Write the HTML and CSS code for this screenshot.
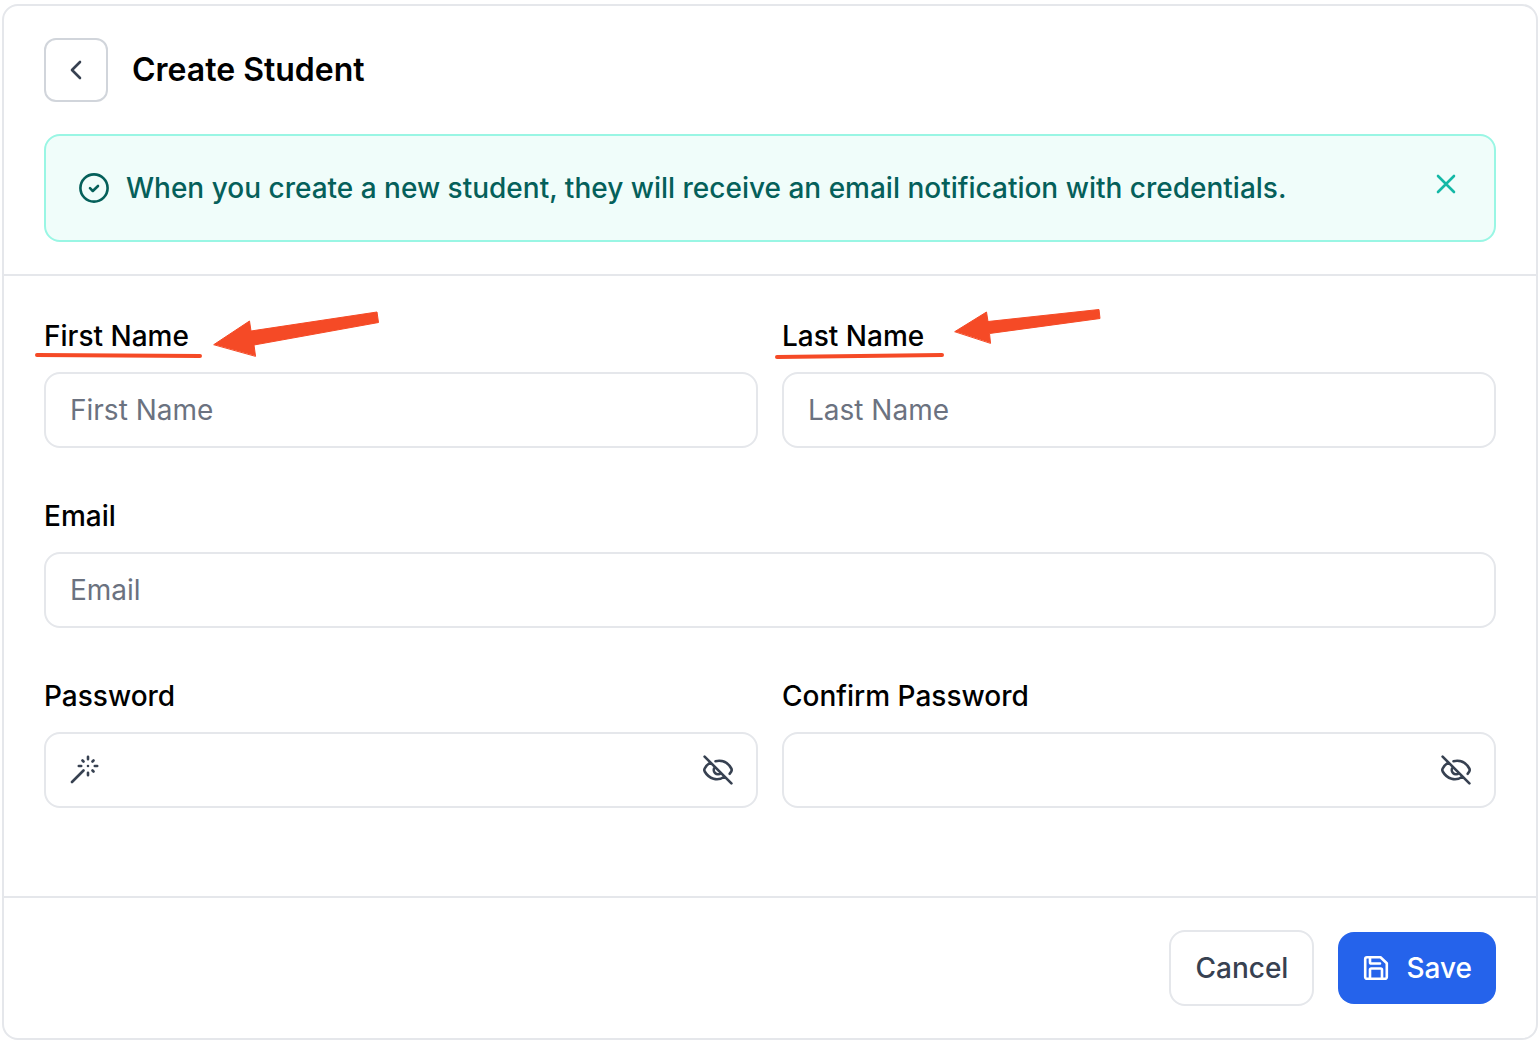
FILE: index.html
```html
<!DOCTYPE html>
<html lang="en">
<head>
  <meta charset="UTF-8" />
  <meta name="viewport" content="width=device-width, initial-scale=1.0"/>
  <title>Create Student</title>
  <link rel="stylesheet" href="styles.css">
</head>
<body>

<main class="card">

  <header class="card-header">
    <div class="title-row">
      <button type="button" class="back-btn" aria-label="Back">
        <svg width="32" height="32" viewBox="0 0 32 32"><path d="M20 8l-8 8 8 8"/></svg>
      </button>
      <h1>Create Student</h1>
    </div>

    <div class="alert" role="status">
      <svg class="alert-icon" width="32" height="32" viewBox="0 0 32 32"><circle cx="16" cy="16" r="13.6"/><path d="M12 16.2l2.8 2.8 5.2-5"/></svg>
      <p>When you create a new student, they will receive an email notification with credentials.</p>
      <button type="button" class="alert-close" aria-label="Dismiss">
        <svg width="32" height="32" viewBox="0 0 32 32"><path d="M8 8l16 16M24 8L8 24"/></svg>
      </button>
    </div>
  </header>

  <form id="studentForm" class="form">
    <div class="field">
      <label for="firstName">First Name</label>
      <input type="text" id="firstName" placeholder="First Name">
      <svg class="mark" width="350" height="60" viewBox="0 0 350 60">
        <path class="mark-line" d="M3 49L166 50"/>
        <path class="mark-arrow" d="M180 38.500L215.500 15L217 25L343 6L344.500 16.500L220 39L221.500 50Z"/>
      </svg>
    </div>

    <div class="field">
      <label for="lastName">Last Name</label>
      <input type="text" id="lastName" placeholder="Last Name">
      <svg class="mark" width="350" height="60" viewBox="0 0 350 60">
        <path class="mark-line" d="M5 51L170 49"/>
        <path class="mark-arrow" d="M183 25.500L214.500 6L216 15.500L327 3.500L328 12.500L217.500 27.500L218.500 37Z"/>
      </svg>
    </div>

    <div class="field wide">
      <label for="email">Email</label>
      <input type="email" id="email" placeholder="Email">
    </div>

    <div class="field">
      <label for="password">Password</label>
      <div class="password-box">
        <button type="button" class="icon-btn" aria-label="Generate password">
          <svg width="32" height="32" viewBox="0 0 32 32"><path d="M4 28L15.500 16.500M20 2.800v2.400M20 18.800v2.400M10.800 12h2.400M26.800 12h2.400M14.500 6.500l1 1M25.500 6.500l-1 1M24.500 16.500l1 1M20 12h.01"/></svg>
        </button>
        <input type="password" id="password">
        <button type="button" class="icon-btn" aria-label="Show password">
          <svg width="32" height="32" viewBox="0 0 32 32"><path d="M2.600 2.600l26.800 26.800M13.500 7.200C21 5.700 26.500 9.500 29.300 14.500q.8 1.500 0 3l-1.600 2.300M8.500 8.500C6 10 4 12 2.700 14.500q-.8 1.500 0 3C7 25 15.500 27.500 22.500 22.700M13 13a4.200 4.200 0 0 0 6 6"/></svg>
        </button>
      </div>
    </div>

    <div class="field">
      <label for="confirmPassword">Confirm Password</label>
      <div class="password-box">
        <input type="password" id="confirmPassword">
        <button type="button" class="icon-btn" aria-label="Show password">
          <svg width="32" height="32" viewBox="0 0 32 32"><path d="M2.600 2.600l26.800 26.800M13.500 7.200C21 5.700 26.500 9.500 29.300 14.500q.8 1.500 0 3l-1.600 2.300M8.500 8.500C6 10 4 12 2.700 14.500q-.8 1.500 0 3C7 25 15.500 27.500 22.500 22.700M13 13a4.200 4.200 0 0 0 6 6"/></svg>
        </button>
      </div>
    </div>
  </form>

  <footer class="card-footer">
    <button type="button" class="btn cancel">Cancel</button>
    <button type="submit" form="studentForm" class="btn save">
      <svg width="28" height="28" viewBox="0 0 28 28"><path d="M5 3.200h13.500l6.300 6V23a1.800 1.800 0 0 1-1.800 1.800H5A1.800 1.800 0 0 1 3.200 23V5A1.800 1.800 0 0 1 5 3.200zM8 3.200v5q0 1.300 1.300 1.300H18M8 24.800v-9q0-1.300 1.300-1.300h9.400q1.300 0 1.300 1.300v9"/></svg>
      Save
    </button>
  </footer>

</main>

</body>
</html>
```
FILE: styles.css
```css
* {
  box-sizing: border-box;
}

body {
  margin: 0;
  padding: 4px 0 2px 2px;
  font-family: 'Inter', sans-serif;
  font-size: 28px;
  line-height: 40px;
  background-color: #ffffff;
  color: #000000;
}

svg {
  display: block;
  flex: none;
  fill: none;
  stroke: currentColor;
  stroke-width: 2.6;
  stroke-linecap: round;
  stroke-linejoin: round;
}

button, input {
  font: inherit;
}

button {
  padding: 0;
  border: none;
  background: none;
  cursor: pointer;
}

.card {
  border: 2px solid #e5e7eb;
  border-radius: 16px;
}

.card-header {
  display: flex;
  flex-direction: column;
  gap: 32px;
  padding: 32px 40px;
  border-bottom: 2px solid #e5e7eb;
}

.title-row {
  display: flex;
  align-items: center;
  gap: 24px;
}

.title-row h1 {
  margin: 0;
  font-size: 32px;
  font-weight: 600;
}

.back-btn {
  display: flex;
  align-items: center;
  justify-content: center;
  width: 64px;
  height: 64px;
  border: 2px solid #d1d5db;
  border-radius: 12px;
  color: #374151;
}

.alert {
  display: flex;
  align-items: center;
  gap: 16px;
  padding: 32px;
  border: 2px solid #99f6e4;
  border-radius: 16px;
  background-color: #f0fdfa;
  color: #05605a;
  font-weight: 500;
}

.alert p {
  flex: 1;
  margin: 0;
}

.alert-close {
  align-self: flex-start;
  color: #14b8a6;
}

.form {
  display: grid;
  grid-template-columns: 1fr 1fr;
  gap: 48px 24px;
  padding: 40px 40px 88px;
}

.field {
  position: relative;
  display: flex;
  flex-direction: column;
  gap: 16px;
  min-width: 0;
}

.wide {
  grid-column: 1 / -1;
}

.field label {
  font-weight: 500;
}

.field > input, .password-box {
  width: 100%;
  height: 76px;
  padding: 0 24px;
  border: 2px solid #e5e7eb;
  border-radius: 16px;
  background-color: #ffffff;
}

input::placeholder {
  color: #6b7280;
  opacity: 1;
}

.password-box {
  display: flex;
  align-items: center;
  gap: 16px;
  padding: 0 22px;
}

.password-box input {
  flex: 1;
  min-width: 0;
  border: none;
  outline: none;
  background: none;
}

.icon-btn {
  color: #374151;
}

/* hand drawn underline and arrow over the name labels */
.mark {
  position: absolute;
  top: -10px;
  left: -10px;
  pointer-events: none;
  color: #f54a26;
}

.mark-line {
  stroke-width: 4;
}

.mark-arrow {
  fill: currentColor;
  stroke-width: 1;
}

.card-footer {
  display: flex;
  align-items: center;
  justify-content: flex-end;
  gap: 24px;
  padding: 32px 40px;
  border-top: 2px solid #e5e7eb;
}

.btn {
  display: flex;
  align-items: center;
  gap: 16px;
  padding: 16px 24px;
  border-radius: 16px;
  font-weight: 500;
}

.cancel {
  height: 76px;
  border: 2px solid #e5e7eb;
  color: #374151;
}

.save {
  height: 72px;
  background-color: #2563eb;
  color: #ffffff;
}
```
